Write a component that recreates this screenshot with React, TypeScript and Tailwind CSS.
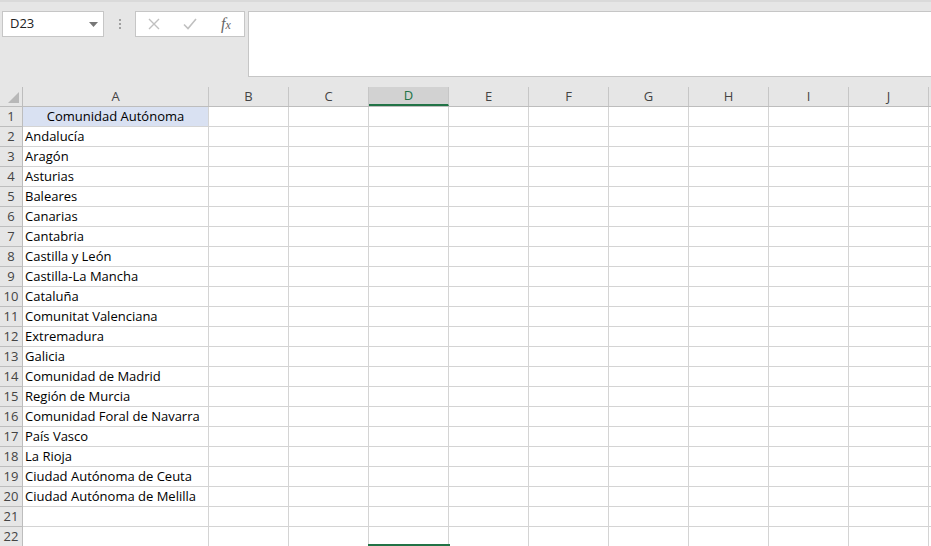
import { ChevronDown } from 'lucide-react'

const comunidades = [
  'Andalucía',
  'Aragón',
  'Asturias',
  'Baleares',
  'Canarias',
  'Cantabria',
  'Castilla y León',
  'Castilla-La Mancha',
  'Cataluña',
  'Comunitat Valenciana',
  'Extremadura',
  'Galicia',
  'Comunidad de Madrid',
  'Región de Murcia',
  'Comunidad Foral de Navarra',
  'País Vasco',
  'La Rioja',
  'Ciudad Autónoma de Ceuta',
  'Ciudad Autónoma de Melilla',
]

const columns = ['B', 'C', 'D', 'E', 'F', 'G', 'H', 'I', 'J']

function FormulaBar() {
  return (
    <div className="h-[87px] bg-[#e6e6e6] border-t-2 border-[#dadada] flex items-start pt-[9px] pl-[2px]">
      <div className="w-[102px] h-[26px] bg-white border border-[#c6c6c6] flex items-center justify-between pl-[7px] pr-[5px] text-[13px] text-[#222]">
        <span>D23</span>
        <svg width="9" height="5" viewBox="0 0 9 5">
          <path d="M0 0 L9 0 L4.5 5 Z" fill="#777" />
        </svg>
      </div>
      <div className="w-[31px] h-[26px] flex flex-col items-center justify-center gap-[2px]">
        <span className="w-[2px] h-[2px] bg-[#a0a0a0]" />
        <span className="w-[2px] h-[2px] bg-[#a0a0a0]" />
        <span className="w-[2px] h-[2px] bg-[#a0a0a0]" />
      </div>
      <div className="w-[110px] h-[26px] bg-white border border-[#c6c6c6] flex items-center">
        <div className="w-[36px] flex justify-center">
          <svg width="12" height="12" viewBox="0 0 12 12">
            <path d="M1 1 L11 11 M11 1 L1 11" stroke="#c0c0c0" strokeWidth="1.4" />
          </svg>
        </div>
        <div className="w-[36px] flex justify-center">
          <svg width="14" height="12" viewBox="0 0 14 12">
            <path d="M1 6.5 L5 10.5 L13 1" stroke="#c0c0c0" strokeWidth="1.6" fill="none" />
          </svg>
        </div>
        <div className="w-[36px] flex justify-center items-baseline font-['Liberation_Serif',serif] italic text-[16px] text-[#666] leading-none">
          f<span className="text-[12px]">x</span>
        </div>
      </div>
      <div className="ml-[3px] flex-1 h-[66px] bg-white border border-[#c6c6c6] border-r-0" />
    </div>
  )
}

function HeaderRow() {
  return (
    <div className="flex h-[20px] bg-[#e6e6e6] border-b border-[#bdbdbd] text-[13px] text-[#444]">
      <div className="w-[23px] border-r border-[#bdbdbd] relative shrink-0">
        <svg className="absolute right-[3px] bottom-[3px]" width="11" height="11" viewBox="0 0 11 11">
          <path d="M11 0 L11 11 L0 11 Z" fill="#b8b8b8" />
        </svg>
      </div>
      <div className="w-[186px] shrink-0 border-r border-[#c6c6c6] flex items-center justify-center pt-[1px]">A</div>
      {columns.map(c => (
        <div
          key={c}
          className={`w-[80px] shrink-0 border-r border-[#c6c6c6] flex items-center justify-center pt-[1px] ${
            c === 'D' ? 'bg-[#d2d2d2] text-[#217346] border-b-2 border-b-[#217346]' : ''
          }`}
        >
          {c}
        </div>
      ))}
      <div className="flex-1" />
    </div>
  )
}

function Row({ n, value }: { n: number; value?: string }) {
  const first = n === 1
  return (
    <div className="flex h-[20px] text-[13px]">
      <div className="w-[23px] shrink-0 bg-[#e6e6e6] border-r border-b border-[#bdbdbd] flex items-center justify-center text-[#444] pt-[1px]">
        {n}
      </div>
      <div
        className={`w-[186px] shrink-0 border-r border-b border-[#d4d4d4] flex items-center text-black whitespace-nowrap pt-[1px] ${
          first ? 'bg-[#d9e1f2] justify-center' : 'pl-[2px]'
        }`}
      >
        {value}
      </div>
      {columns.map(c => (
        <div key={c} className="w-[80px] shrink-0 border-r border-b border-[#d4d4d4]" />
      ))}
      <div className="flex-1 border-b border-[#d4d4d4]" />
    </div>
  )
}

export default function App() {
  const rows = ['Comunidad Autónoma', ...comunidades, '', '']
  return (
    <div className="w-[931px] h-[546px] overflow-hidden bg-white font-['Open_Sans',sans-serif] relative">
      <FormulaBar />
      <HeaderRow />
      {rows.map((v, i) => (
        <Row key={i} n={i + 1} value={v} />
      ))}
      {/* selected cell D23 peeking at the bottom */}
      <div className="absolute left-[368px] top-[544px] w-[82px] h-[2px] bg-[#217346]" />
    </div>
  )
}
